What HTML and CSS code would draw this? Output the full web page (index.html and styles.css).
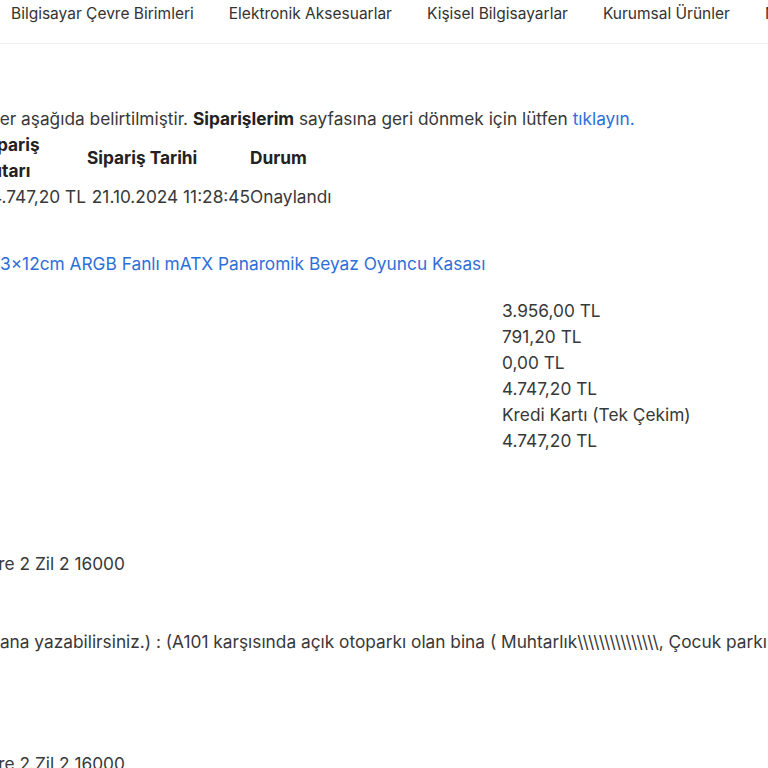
FILE: index.html
```html
<!DOCTYPE html>
<html lang="tr">
<head>
  <meta charset="UTF-8" />
  <meta name="viewport" content="width=device-width, initial-scale=1.0"/>
  <title>Sipariş Detayı</title>
  <link rel="stylesheet" href="styles.css">
</head>
<body>
  <header class="topnav">
    <ul class="menu">
      <li><a href="#">Bilgisayar Çevre Birimleri</a></li>
      <li><a href="#">Elektronik Aksesuarlar</a></li>
      <li><a href="#">Kişisel Bilgisayarlar</a></li>
      <li><a href="#">Kurumsal Ürünler</a></li>
      <li><a href="#">Network Ürünleri</a></li>
    </ul>
  </header>

  <main class="order">
    <p class="intro">Bilgiler aşağıda belirtilmiştir. <strong>Siparişlerim</strong> sayfasına geri dönmek için lütfen <a href="#">tıklayın.</a></p>

    <table class="summary">
      <thead>
        <tr>
          <th class="col-total">Sipariş Tutarı</th>
          <th class="col-date">Sipariş Tarihi</th>
          <th>Durum</th>
        </tr>
      </thead>
      <tbody>
        <tr>
          <td>4.747,20 TL</td>
          <td>21.10.2024 11:28:45</td>
          <td>Onaylandı</td>
        </tr>
      </tbody>
    </table>

    <p class="product"><a href="#">3×12cm ARGB Fanlı mATX Panaromik Beyaz Oyuncu Kasası</a></p>

    <!-- totals -->
    <div class="totals">
      <div>3.956,00 TL</div>
      <div>791,20 TL</div>
      <div>0,00 TL</div>
      <div>4.747,20 TL</div>
      <div>Kredi Kartı (Tek Çekim)</div>
      <div>4.747,20 TL</div>
    </div>

    <p class="address">Daire 2 Zil 2 16000</p>
    <p class="note">alana yazabilirsiniz.) : (A101 karşısında açık otoparkı olan bina ( Muhtarlık\\\\\\\\\\\\\\\, Çocuk parkı karşısı )</p>
    <p class="address address-last">Daire 2 Zil 2 16000</p>
  </main>
</body>
</html>
```

FILE: styles.css
```css
* { margin: 0; padding: 0; box-sizing: border-box; }

html, body {
  font-family: 'Inter', 'Noto Sans', sans-serif;
  font-size: 17.3px;
  line-height: 26px;
  color: #383838;
  background-color: #fff;
  overflow: hidden;
}

a {
  color: #2d6fd9;
  text-decoration: none;
}

/* Top menu */
.topnav {
  height: 44px;
  border-bottom: 1px solid #efefef;
  overflow: hidden;
}

.menu {
  display: flex;
  gap: 35px;
  list-style: none;
  padding: 0 0 0 11px;
  white-space: nowrap;
}

.menu a {
  color: #333;
  font-size: 15.5px;
  line-height: 22px;
}

/* Order details */
.order {
  padding-top: 62px;
  white-space: nowrap;
}

.intro {
  margin-left: -39px;
}

.intro strong {
  color: #222;
}

.summary {
  border-collapse: collapse;
  margin-left: -19px;
}

.summary th,
.summary td {
  padding: 0;
  vertical-align: middle;
}

.summary th {
  color: #222;
  font-weight: 700;
  text-align: left;
  white-space: normal;
}

.summary td {
  text-align: right;
}

.summary td:first-child {
  padding-right: 1px;
}

.col-total { width: 106px; }
.col-date { width: 163px; }

.product {
  margin-top: 41px;
}

.totals {
  margin-top: 21px;
  padding-left: 502px;
}

.address {
  margin-top: 97px;
  margin-left: -28px;
}

.note {
  margin-top: 52px;
  margin-left: -14px;
}

.address-last {
  margin-top: 96px;
}
```
